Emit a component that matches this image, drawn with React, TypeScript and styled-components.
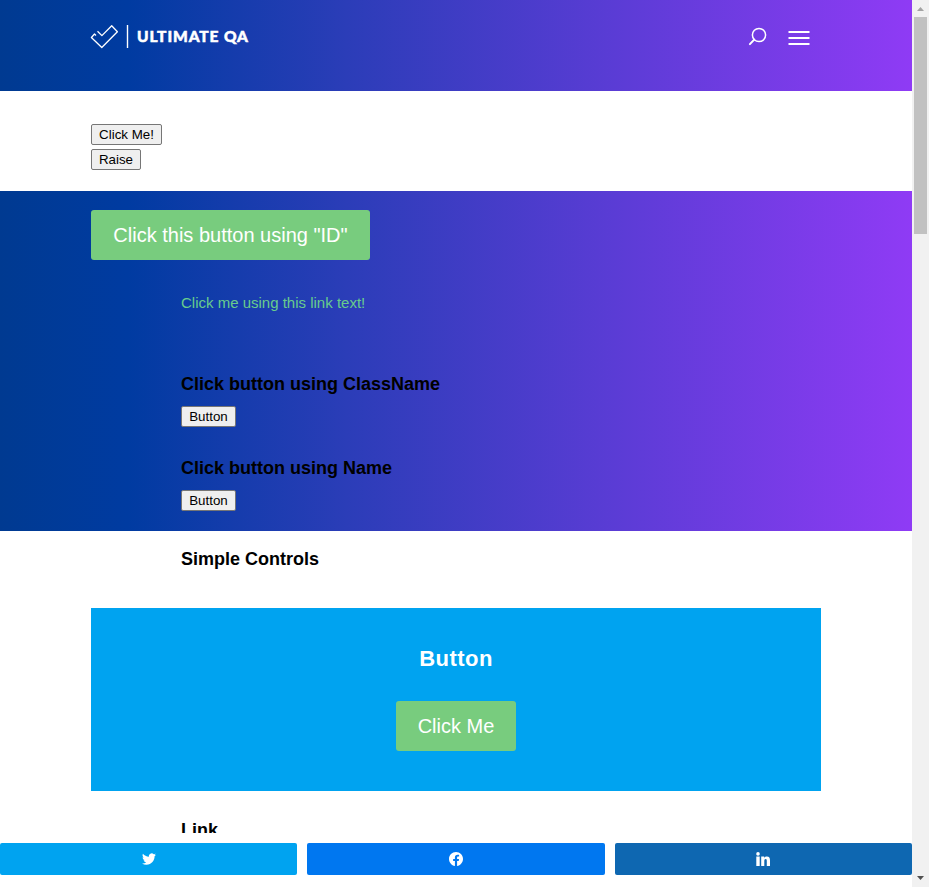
import React from "react";
import styled, { createGlobalStyle } from "styled-components";

const GlobalStyle = createGlobalStyle`
  * { box-sizing: border-box; }
  html, body { margin: 0; height: 887px; overflow: hidden; background: #fff; }
  body { font-family: "Liberation Sans", Arial, sans-serif; color: #000; }
`;

const gradient = "linear-gradient(90deg, #003a91 0%, #003ba1 14%, #2b3db8 38%, #8f3bf5 100%)";

const Window = styled.div`
  display: grid;
  grid-template-columns: 912px 17px;
  width: 929px;
  height: 887px;
`;
const Page = styled.div`
  display: flex;
  flex-direction: column;
  height: 887px;
  overflow: hidden;
`;
const Content = styled.main`
  flex: 0 0 833px;
  overflow: hidden;
`;
const Header = styled.header`
  display: flex;
  align-items: flex-start;
  justify-content: space-between;
  height: 91px;
  padding: 24px 102px 0 90px;
  background: ${gradient};
`;
const Logo = styled.svg`
  display: block;
  width: 162px;
  height: 26px;
`;
const LogoText = styled.text`
  font-family: Lato, sans-serif;
  font-size: 15.5px;
  font-weight: 900;
  fill: #fff;
  stroke: #fff;
  stroke-width: 0.5px;
`;
const Actions = styled.div`
  display: flex;
  gap: 18px;
`;
const ActionIcon = styled.svg`
  display: block;
  width: 22px;
  height: 26px;
`;
const PlainSection = styled.section`
  display: flex;
  flex-direction: column;
  align-items: flex-start;
  gap: 4px;
  height: 100px;
  padding: 33px 91px 0;
`;
const NativeButton = styled.button<{ $width: number }>`
  width: ${(p) => p.$width}px;
  height: 21px;
  padding: 0;
  border: 1px solid #767676;
  border-radius: 2px;
  background: #efefef;
  color: #000;
  font: 13.333px/19px "Liberation Sans", Arial, sans-serif;
  display: block;
`;
const Hero = styled.section`
  height: 340px;
  padding: 19px 91px 0;
  background: ${gradient};
`;
const GreenButton = styled.button<{ $width: number }>`
  display: block;
  width: ${(p) => p.$width}px;
  height: 50px;
  padding: 0;
  border: 0;
  border-radius: 3px;
  background: #78cc7e;
  color: #fff;
  font: 20px/34px "Liberation Sans", Arial, sans-serif;
`;
const Column = styled.div`
  padding-left: 90px;
`;
const TextLink = styled.a`
  display: block;
  height: 26px;
  margin-top: 30px;
  color: #68cc8c;
  font-size: 15px;
  line-height: 26px;
`;
const Heading = styled.h4<{ $top: number }>`
  margin: ${(p) => p.$top}px 0 0;
  height: 31px;
  font-size: 18px;
  line-height: 18px;
  font-weight: 700;
`;
const Controls = styled.section`
  padding: 19px 91px 0;
`;
const Promo = styled.div`
  display: flex;
  flex-direction: column;
  align-items: center;
  height: 183px;
  margin-top: 27px;
  padding-top: 40px;
  background: #00a3f0;
`;
const PromoTitle = styled.h2`
  margin: 0 0 31px;
  color: #fff;
  font-size: 22px;
  line-height: 22px;
  font-weight: 700;
  letter-spacing: 0.45px;
`;
const ShareBar = styled.footer`
  display: flex;
  gap: 10px;
  height: 54px;
  padding: 10px 0 12px;
  background: #fff;
`;
const ShareButton = styled.a<{ $color: string }>`
  display: flex;
  flex: 1;
  align-items: center;
  justify-content: center;
  border-radius: 2px;
  background: ${(p) => p.$color};
`;
const ShareIcon = styled.svg`
  width: 14px;
  height: 14px;
  fill: #fff;
`;
const Scrollbar = styled.div`
  display: flex;
  flex-direction: column;
  align-items: center;
  background: #f1f1f1;
`;
const Arrow = styled.svg`
  display: block;
  width: 17px;
  height: 17px;
`;
const Thumb = styled.div`
  width: 13px;
  height: 217px;
  margin-bottom: auto;
  background: #c1c1c1;
`;

export default function App() {
  return (
    <>
      <GlobalStyle />
      <Window>
        <Page>
          <Content>
            <Header>
              <Logo viewBox="0 0 162 26" aria-label="Ultimate QA">
                <path
                  d="M6 11.4 4.5 10 1.4 13.5 11.8 23.5 27.4 7.7 21.7 1.8 11.9 11.6 7.5 7.2"
                  fill="none"
                  stroke="#fff"
                  strokeWidth="1.3"
                  strokeLinejoin="round"
                />
                <path d="M37.5 1v23" stroke="#fff" strokeWidth="1.4" />
                <LogoText x="47" y="18" textLength="111" lengthAdjust="spacing">ULTIMATE QA</LogoText>
              </Logo>
              <Actions>
                <ActionIcon viewBox="0 0 22 26" aria-label="Search">
                  <circle cx="11" cy="11" r="6.6" fill="none" stroke="#fff" strokeWidth="1.5" />
                  <path d="m6.2 15.6-4.3 4.5" stroke="#fff" strokeWidth="2" strokeLinecap="round" />
                </ActionIcon>
                <ActionIcon viewBox="0 0 22 26" aria-label="Menu">
                  <path d="M.5 8h21M.5 14h21M.5 20h21" stroke="#fff" strokeWidth="2" />
                </ActionIcon>
              </Actions>
            </Header>
            <PlainSection>
              <NativeButton $width={71}>Click Me!</NativeButton>
              <NativeButton $width={50}>Raise</NativeButton>
            </PlainSection>
            <Hero>
              <GreenButton $width={279}>Click this button using "ID"</GreenButton>
              <Column>
                <TextLink>Click me using this link text!</TextLink>
                <Heading $top={59}>Click button using ClassName</Heading>
                <NativeButton $width={55}>Button</NativeButton>
                <Heading $top={32}>Click button using Name</Heading>
                <NativeButton $width={55}>Button</NativeButton>
              </Column>
            </Hero>
            <Controls>
              <Column>
                <Heading $top={0}>Simple Controls</Heading>
              </Column>
              <Promo>
                <PromoTitle>Button</PromoTitle>
                <GreenButton $width={120}>Click Me</GreenButton>
              </Promo>
              <Column>
                <Heading $top={30}>Link</Heading>
              </Column>
            </Controls>
          </Content>
          <ShareBar>
            <ShareButton $color="#00a3f0" aria-label="Twitter">
              <ShareIcon viewBox="0 0 24 24">
                <path d="M23.95 4.57a10 10 0 0 1-2.82.77 4.96 4.96 0 0 0 2.16-2.72c-.95.55-2 .95-3.13 1.18a4.92 4.92 0 0 0-8.38 4.48C7.69 8.1 4.07 6.13 1.64 3.16a4.82 4.82 0 0 0-.67 2.48c0 1.71.87 3.21 2.19 4.1a4.9 4.9 0 0 1-2.23-.62v.06a4.92 4.92 0 0 0 3.95 4.83 5 5 0 0 1-2.21.08 4.94 4.94 0 0 0 4.6 3.42A9.87 9.87 0 0 1 0 19.54a13.94 13.94 0 0 0 7.55 2.21c9.05 0 14-7.5 14-13.98 0-.21 0-.42-.02-.63a9.94 9.94 0 0 0 2.46-2.55z" />
              </ShareIcon>
            </ShareButton>
            <ShareButton $color="#0077f0" aria-label="Facebook">
              <ShareIcon viewBox="0 0 24 24">
                <path d="M24 12.07C24 5.41 18.63 0 12 0S0 5.4 0 12.07C0 18.1 4.39 23.1 10.13 24v-8.44H7.08v-3.49h3.04V9.41c0-3.02 1.8-4.7 4.54-4.7 1.31 0 2.68.24 2.68.24v2.97h-1.5c-1.5 0-1.96.93-1.96 1.89v2.26h3.32l-.53 3.5h-2.8V24C19.62 23.1 24 18.1 24 12.07" />
              </ShareIcon>
            </ShareButton>
            <ShareButton $color="#0e67b1" aria-label="LinkedIn">
              <ShareIcon viewBox="0 0 14 14">
                <circle cx="2" cy="1.9" r="1.8" />
                <path d="M.3 4.6h3.4V14H.3zM5.2 4.6h3v1.2c.6-1 1.5-1.4 2.7-1.4 2.4 0 3.1 1.5 3.1 4V14h-3.2V9c0-1.3-.2-2-1.1-2-1.1 0-1.4.9-1.4 2v5H5.2z" />
              </ShareIcon>
            </ShareButton>
          </ShareBar>
        </Page>
        <Scrollbar>
          <Arrow viewBox="0 0 17 17">
            <path d="M5 11h7L8.5 7z" fill="#a3a3a3" />
          </Arrow>
          <Thumb />
          <Arrow viewBox="0 0 17 17">
            <path d="M5 6h7l-3.5 4z" fill="#505050" />
          </Arrow>
        </Scrollbar>
      </Window>
    </>
  );
}
